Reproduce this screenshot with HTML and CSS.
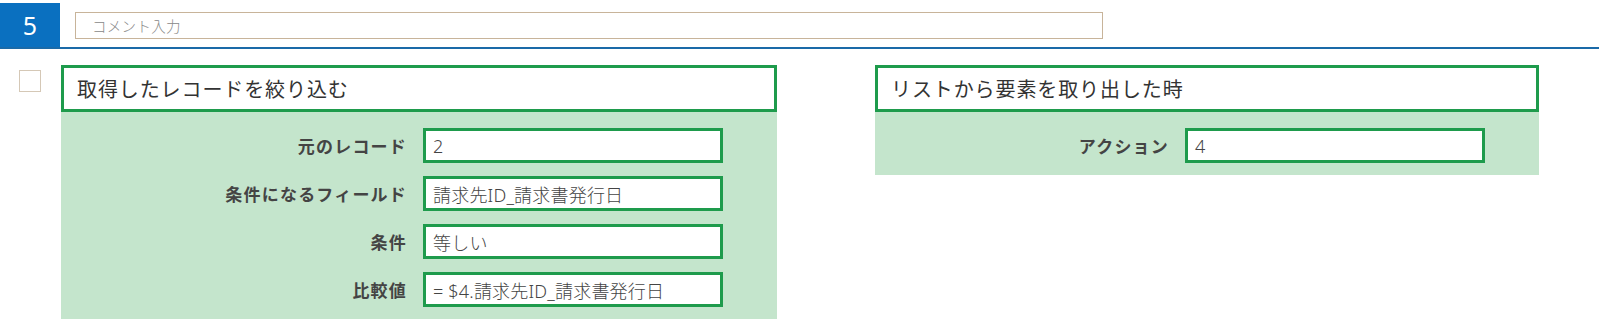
FILE: index.html
```html
<!DOCTYPE html>
<html lang="ja">
<head>
    <meta charset="UTF-8">
    <title>フロー編集</title>
    <link rel="stylesheet" href="styles.css">
</head>
<body>
    <div class="step-header">
        <div class="step-no">5</div>
        <input type="text" class="comment" placeholder="コメント入力">
    </div>

    <div class="step-body">
        <input type="checkbox" class="step-check">

        <div class="card card-left">
            <div class="card-title">取得したレコードを絞り込む</div>
            <div class="card-fields">
                <div class="field">
                    <label>元のレコード</label>
                    <div class="value">2</div>
                </div>
                <div class="field">
                    <label>条件になるフィールド</label>
                    <div class="value">請求先ID_請求書発行日</div>
                </div>
                <div class="field">
                    <label>条件</label>
                    <div class="value">等しい</div>
                </div>
                <div class="field">
                    <label>比較値</label>
                    <div class="value">= $4.請求先ID_請求書発行日</div>
                </div>
            </div>
        </div>

        <div class="card card-right">
            <div class="card-title">リストから要素を取り出した時</div>
            <div class="card-fields">
                <div class="field">
                    <label>アクション</label>
                    <div class="value">4</div>
                </div>
            </div>
        </div>
    </div>
</body>
</html>
```

FILE: styles.css
```css
body { margin: 0; font-family: "Noto Sans", "Noto Sans CJK JP", sans-serif; background: #fff; color: #333; }

.step-header { display: flex; align-items: flex-start; height: 47px; border-bottom: 2px solid #1a6aa8; }
.step-no { width: 60px; height: 44px; margin-top: 3px; background: #0a70c0; color: #fff; font-size: 25px; display: flex; align-items: center; justify-content: center; }
.comment { margin: 12px 0 0 15px; width: 1028px; height: 27px; box-sizing: border-box; border: 1px solid #c8b49a; padding: 0 16px; font-family: inherit; font-size: 14.5px; font-weight: 300; letter-spacing: 0.3px; color: #555; outline: none; }
.comment::placeholder { color: #888; }

.step-body { display: flex; align-items: flex-start; margin-top: 16px; }
.step-check { appearance: none; margin: 5px 0 0 19px; width: 22px; height: 22px; border: 1px solid #d5c8b6; background: #fff; }

.card { margin-left: 20px; }
.card-right { margin-left: 98px; }
.card-left { width: 716px; }
.card-right { width: 664px; }

.card-title { height: 47px; box-sizing: border-box; border: 3px solid #1e9b4c; background: #fff; padding-left: 13px; display: flex; align-items: center; font-size: 20px; letter-spacing: 0.9px; color: #333; }

.card-fields { background: #c4e5cc; padding: 16px 54px 12px 0; display: flex; flex-direction: column; gap: 13px; }
.field { display: flex; align-items: center; justify-content: flex-end; gap: 16px; }
.field label { font-size: 17px; font-weight: bold; letter-spacing: 1.2px; color: #444; }
.value { width: 300px; height: 35px; box-sizing: border-box; border: 3px solid #1e9b4c; background: #fff; padding-left: 7px; display: flex; align-items: center; font-size: 18px; font-weight: 300; letter-spacing: 0.2px; color: #444; }
```
